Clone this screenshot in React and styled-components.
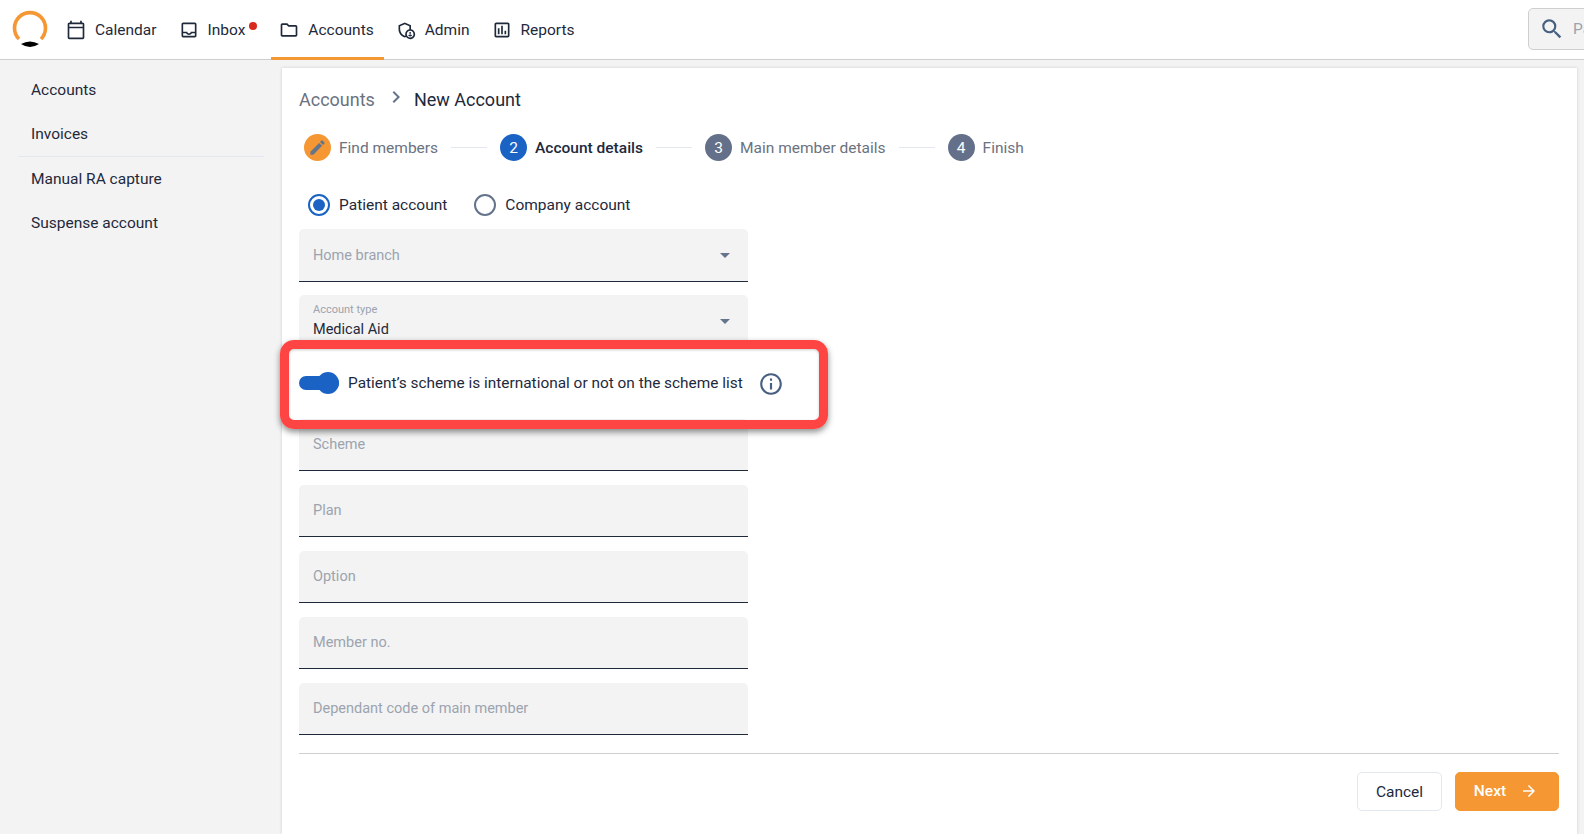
import React from "react";
import styled, { createGlobalStyle } from "styled-components";
import {
  MdOutlineCalendarToday,
  MdOutlineInbox,
  MdOutlineFolder,
  MdOutlineAdminPanelSettings,
  MdOutlineAssessment,
  MdSearch,
  MdChevronRight,
  MdEdit,
  MdArrowDropDown,
  MdInfoOutline,
  MdArrowForward,
} from "react-icons/md";

const GlobalStyle = createGlobalStyle`
  html, body { margin: 0; height: 100%; overflow: hidden; }
  body {
    font-family: "Roboto", "Liberation Sans", sans-serif;
    font-size: 15.5px;
    color: #1e293b;
    background: #f3f3f3;
  }
  * { box-sizing: border-box; }
`;

const Page = styled.div`
  height: 834px;
  display: flex;
  flex-direction: column;
`;

const Header = styled.header`
  height: 60px;
  flex-shrink: 0;
  background: #fff;
  border-bottom: 1px solid #cfcfcf;
  display: flex;
  align-items: stretch;
  padding-left: 12px;
`;

const Logo = styled.div`
  width: 36px;
  margin-right: 10px;
  display: flex;
  align-items: center;
`;

const Nav = styled.nav`
  display: flex;
  gap: 4px;
  flex: 1;
`;

const Tab = styled.a`
  position: relative;
  height: 60px;
  padding: 3px ${(p) => (p.$dot ? "22px" : "10px")} 0 10px;
  display: flex;
  align-items: center;
  gap: 11px;
  color: #1e293b;
  border-bottom: 3px solid ${(p) => (p.$active ? "#f59733" : "transparent")};

  svg {
    font-size: 20px;
    margin: 0 -2px;
    color: #1e293b;
  }
`;

const Dot = styled.span`
  position: absolute;
  top: 22px;
  right: 10px;
  width: 8px;
  height: 8px;
  border-radius: 50%;
  background: #d9281e;
`;

const Search = styled.div`
  width: 70px;
  height: 42px;
  margin-top: 8px;
  margin-right: -14px;
  background: #f3f3f3;
  border: 1px solid #cfcfcf;
  border-radius: 5px 0 0 5px;
  display: flex;
  align-items: center;
  padding-left: 10px;
  gap: 8px;
  overflow: hidden;
  color: #9ca3af;
  white-space: nowrap;

  svg {
    font-size: 26px;
    color: #475f80;
    flex-shrink: 0;
  }
`;

const Body = styled.div`
  flex: 1;
  display: flex;
  min-height: 0;
`;

const Sidebar = styled.aside`
  width: 282px;
  flex-shrink: 0;
  padding: 8px 18px 0;
`;

const SideItem = styled.div`
  height: ${(p) => (p.$divided ? "45px" : "44px")};
  padding-left: 13px;
  display: flex;
  align-items: center;
  border-bottom: ${(p) => (p.$divided ? "1px solid #e2e8f0" : "none")};
`;

const Card = styled.main`
  flex: 1;
  margin: 8px 7px 0 0;
  background: #fff;
  box-shadow: 0 0 3px rgba(0, 0, 0, 0.15);
  padding: 20px 18px 0 17px;
`;

const Breadcrumb = styled.div`
  height: 24px;
  display: flex;
  align-items: center;
  font-size: 18px;
  padding-bottom: 2px;
  color: #6b7280;

  svg {
    font-size: 24px;
    margin: -4px 6px 0 9px;
    color: #64748b;
  }
`;

const Current = styled.span`
  color: #1e293b;
`;

const Stepper = styled.div`
  margin-top: 22px;
  padding-left: 5px;
  display: flex;
  align-items: center;
  gap: 13px;
`;

const Step = styled.div`
  display: flex;
  align-items: center;
  gap: 8px;
  color: ${(p) => (p.$current ? "#1e293b" : "#6b7280")};
  font-weight: ${(p) => (p.$current ? 500 : 400)};
`;

const StepCircle = styled.span`
  width: 27px;
  height: 27px;
  border-radius: 50%;
  background: ${(p) => p.$bg};
  color: #fff;
  display: flex;
  align-items: center;
  justify-content: center;
  font-size: 15.5px;
  font-weight: 400;

  svg {
    font-size: 19px;
    color: #64748b;
  }
`;

const StepLine = styled.span`
  width: 36px;
  height: 1px;
  background: #e2e8f0;
`;

const RadioRow = styled.div`
  margin-top: 33px;
  padding-left: 9px;
  display: flex;
  gap: 27px;
`;

const RadioLabel = styled.label`
  display: flex;
  align-items: center;
  gap: 9px;
  height: 22px;
`;

const RadioMark = styled.span`
  width: 22px;
  height: 22px;
  border-radius: 50%;
  border: 2px solid ${(p) => (p.$on ? "#1a63c4" : "#64748b")};
  display: flex;
  align-items: center;
  justify-content: center;

  &::after {
    content: "";
    width: 12px;
    height: 12px;
    border-radius: 50%;
    background: ${(p) => (p.$on ? "#1a63c4" : "transparent")};
  }
`;

const Form = styled.div`
  margin-top: 13px;
  width: 449px;
  display: flex;
  flex-direction: column;
  gap: 14px;
`;

const Field = styled.div`
  height: ${(p) => (p.$tall ? "53px" : "52px")};
  margin-bottom: ${(p) => (p.$tall ? "-1px" : "0")};
  background: #f3f3f3;
  border-bottom: 1px solid #1e293b;
  border-radius: 5px 5px 0 0;
  padding: 0 14px;
  display: flex;
  align-items: center;
  justify-content: space-between;
`;

const Placeholder = styled.span`
  color: #9ca3af;
  font-size: 14.5px;
`;

const FieldValue = styled.div`
  display: flex;
  flex-direction: column;
  gap: 5px;
  font-size: 14.5px;
  margin-top: -1px;
`;

const FloatLabel = styled.span`
  color: #9ca3af;
  font-size: 11px;
`;

const Caret = styled(MdArrowDropDown)`
  font-size: 24px;
  color: #64748b;
  margin-right: -3px;
`;

const ToggleRow = styled.div`
  position: relative;
  height: 44px;
  display: flex;
  align-items: center;
  gap: 9px;
  white-space: nowrap;
  font-size: 15.4px;

  > svg {
    font-size: 26px;
    color: #475f80;
    margin: 2px 0 0 6px;
    flex-shrink: 0;
  }
`;

const ToggleTrack = styled.span`
  width: 40px;
  height: 14px;
  flex-shrink: 0;
  border-radius: 7px;
  background: #1a63c4;
  display: flex;
  align-items: center;
  justify-content: flex-end;
`;

const ToggleKnob = styled.span`
  width: 22px;
  height: 22px;
  flex-shrink: 0;
  border-radius: 50%;
  background: #1a63c4;
`;

const Highlight = styled.div`
  position: absolute;
  top: -21px;
  left: -19px;
  width: 548px;
  height: 89px;
  border: 9px solid #ff4444;
  border-radius: 14px;
  box-shadow: 0 3px 6px rgba(0, 0, 0, 0.45), inset 0 1px 3px rgba(0, 0, 0, 0.2);
  pointer-events: none;
`;

const Footer = styled.footer`
  margin-top: 18px;
  border-top: 1px solid #cfcfcf;
  padding-top: 18px;
  display: flex;
  justify-content: flex-end;
  gap: 13px;
`;

const Button = styled.button`
  height: 39px;
  width: ${(p) => (p.$primary ? "104px" : "85px")};
  padding: 0 ${(p) => (p.$primary ? "2px" : "0")} ${(p) => (p.$primary ? "2px" : "0")} 0;
  border-radius: 5px;
  border: 1px solid ${(p) => (p.$primary ? "#f59733" : "#e2e8f0")};
  background: ${(p) => (p.$primary ? "#f59733" : "#fff")};
  color: ${(p) => (p.$primary ? "#fff" : "#1e293b")};
  font: inherit;
  font-weight: ${(p) => (p.$primary ? 500 : 400)};
  display: flex;
  align-items: center;
  justify-content: center;
  gap: 14px;

  svg {
    font-size: 18px;
  }
`;

const navItems = [
  { label: "Calendar", Icon: MdOutlineCalendarToday },
  { label: "Inbox", Icon: MdOutlineInbox, dot: true },
  { label: "Accounts", Icon: MdOutlineFolder, active: true },
  { label: "Admin", Icon: MdOutlineAdminPanelSettings },
  { label: "Reports", Icon: MdOutlineAssessment },
];

const steps = [
  { n: 2, label: "Account details", bg: "#1a63c4", current: true },
  { n: 3, label: "Main member details", bg: "#64708a" },
  { n: 4, label: "Finish", bg: "#64708a" },
];

const emptyFields = ["Plan", "Option", "Member no.", "Dependant code of main member"];

const LogoMark = () => (
  <svg width="36" height="40" viewBox="0 0 36 40">
    <path
      d="M7 29 A15.5 15.5 0 1 1 29 29"
      fill="none"
      stroke="#f59733"
      strokeWidth="3.6"
    />
    <path d="M9 34 Q18 29 27 34 Q18 40 9 34 Z" fill="#000" />
  </svg>
);

export default function App() {
  return (
    <Page>
      <GlobalStyle />
      <Header>
        <Logo>
          <LogoMark />
        </Logo>
        <Nav>
          {navItems.map(({ label, Icon, dot, active }) => (
            <Tab key={label} $dot={dot} $active={active}>
              <Icon />
              {label}
              {dot && <Dot />}
            </Tab>
          ))}
        </Nav>
        <Search>
          <MdSearch />
          Patient
        </Search>
      </Header>
      <Body>
        <Sidebar>
          <SideItem>Accounts</SideItem>
          <SideItem $divided>Invoices</SideItem>
          <SideItem>Manual RA capture</SideItem>
          <SideItem>Suspense account</SideItem>
        </Sidebar>
        <Card>
          <Breadcrumb>
            Accounts
            <MdChevronRight />
            <Current>New Account</Current>
          </Breadcrumb>
          <Stepper>
            <Step>
              <StepCircle $bg="#f59733">
                <MdEdit />
              </StepCircle>
              Find members
            </Step>
            {steps.map((s) => (
              <React.Fragment key={s.n}>
                <StepLine />
                <Step $current={s.current}>
                  <StepCircle $bg={s.bg}>{s.n}</StepCircle>
                  {s.label}
                </Step>
              </React.Fragment>
            ))}
          </Stepper>
          <RadioRow>
            <RadioLabel>
              <RadioMark $on />
              Patient account
            </RadioLabel>
            <RadioLabel>
              <RadioMark />
              Company account
            </RadioLabel>
          </RadioRow>
          <Form>
            <Field $tall>
              <Placeholder>Home branch</Placeholder>
              <Caret />
            </Field>
            <Field>
              <FieldValue>
                <FloatLabel>Account type</FloatLabel>
                Medical Aid
              </FieldValue>
              <Caret />
            </Field>
            <ToggleRow>
              <ToggleTrack>
                <ToggleKnob />
              </ToggleTrack>
              Patient’s scheme is international or not on the scheme list
              <MdInfoOutline />
              <Highlight />
            </ToggleRow>
            <Field>
              <Placeholder>Scheme</Placeholder>
            </Field>
            {emptyFields.map((f) => (
              <Field key={f}>
                <Placeholder>{f}</Placeholder>
              </Field>
            ))}
          </Form>
          <Footer>
            <Button>Cancel</Button>
            <Button $primary>
              Next
              <MdArrowForward />
            </Button>
          </Footer>
        </Card>
      </Body>
    </Page>
  );
}
